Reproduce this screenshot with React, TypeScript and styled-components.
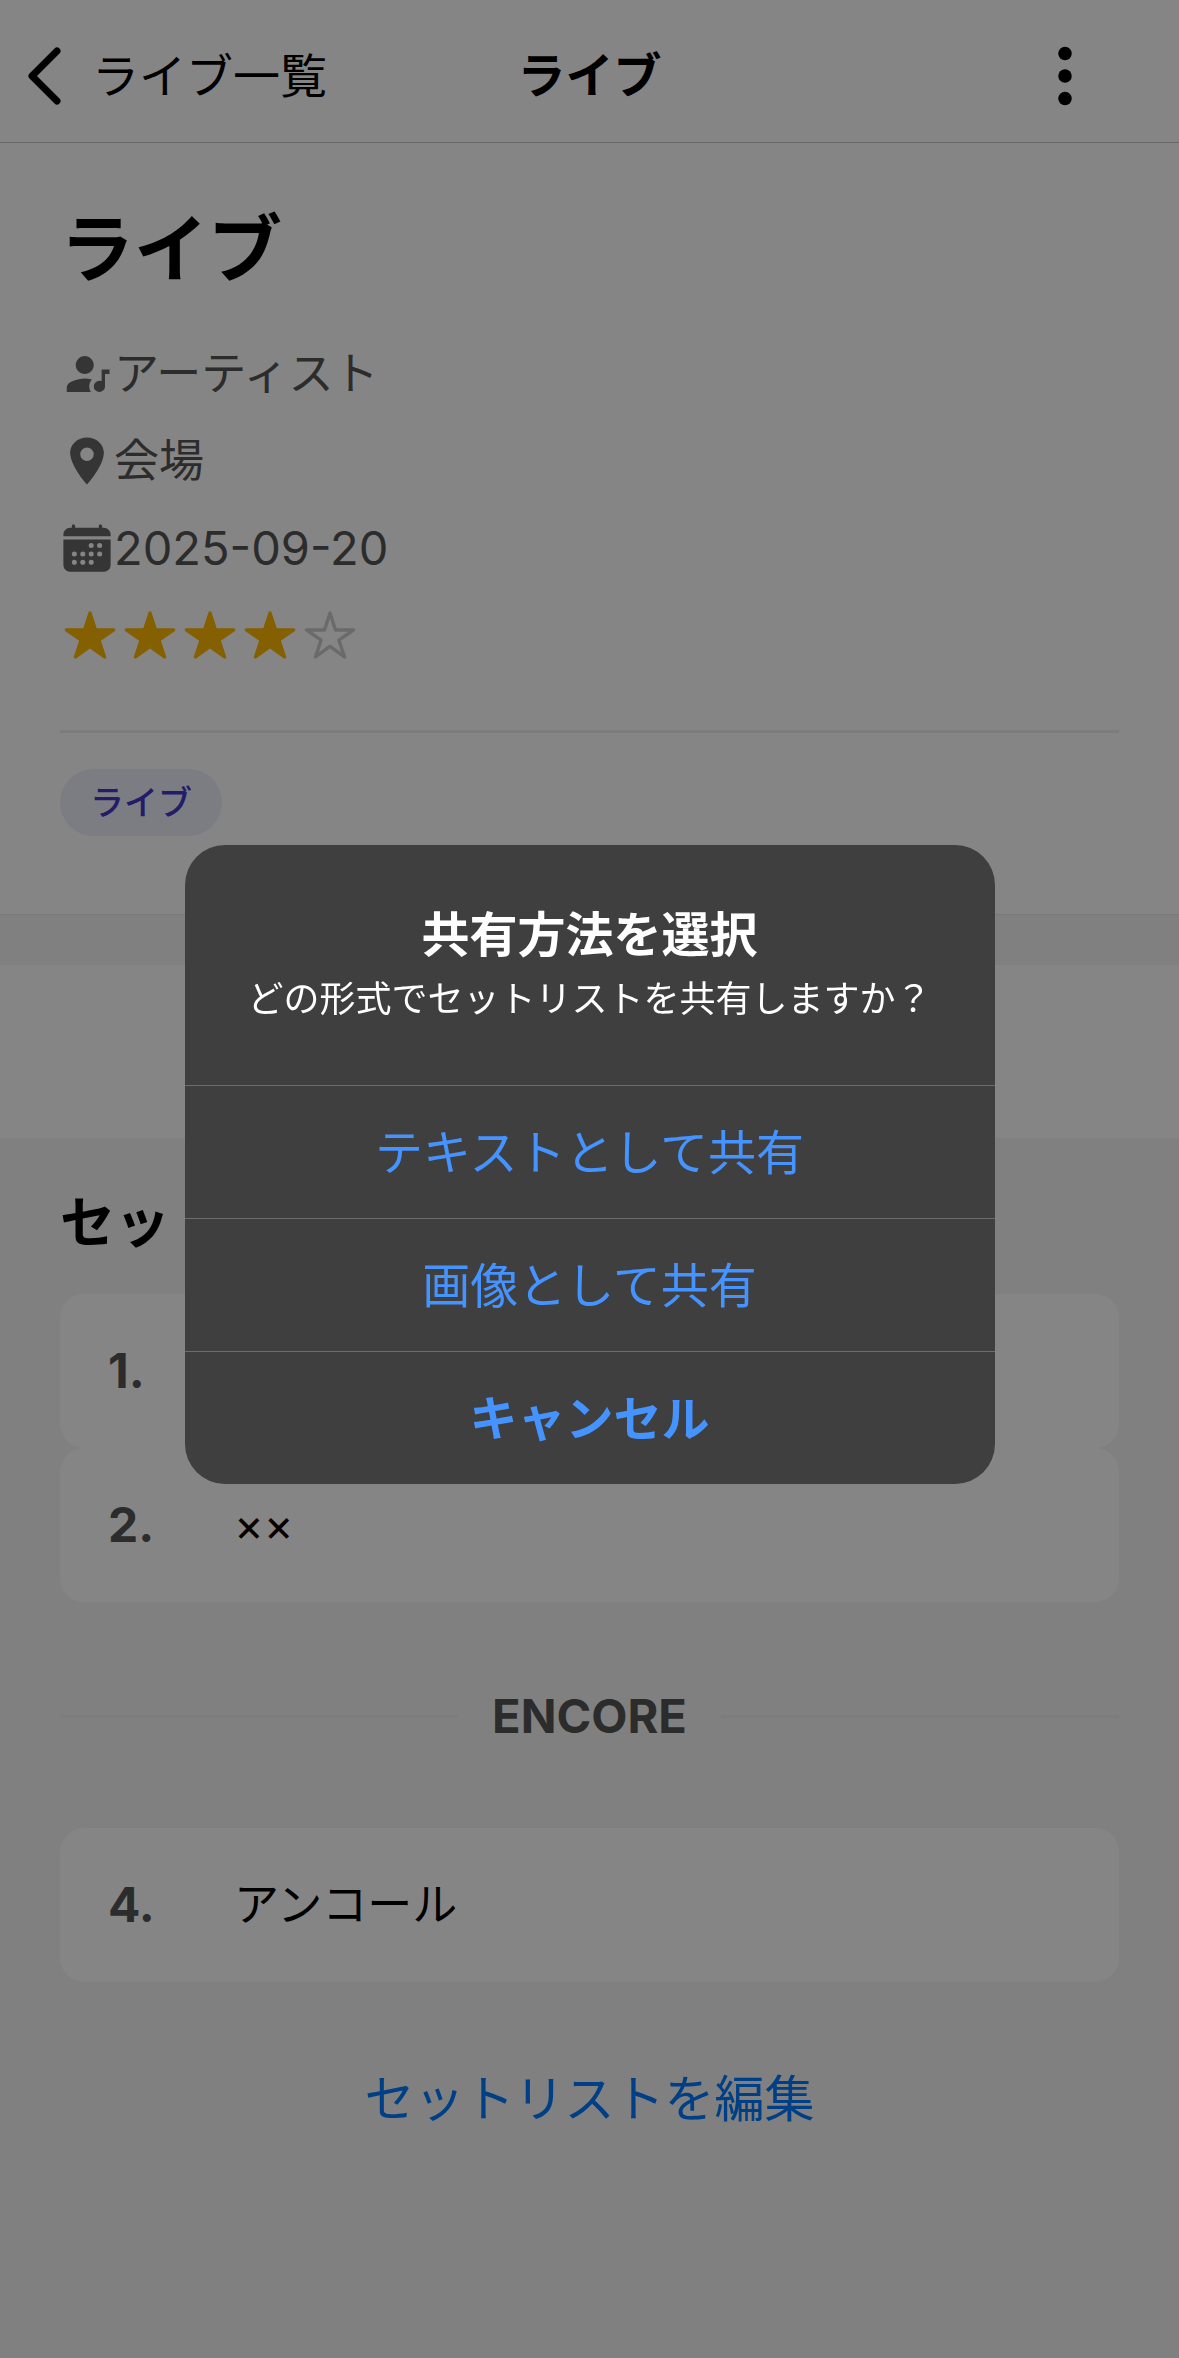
import React from "react";
import styled, { createGlobalStyle } from "styled-components";
import {
  IoCalendar,
  IoEllipsisVertical,
  IoLocationSharp,
  IoStar,
  IoStarOutline,
} from "react-icons/io5";

const GlobalStyle = createGlobalStyle`
  *, *::before, *::after {
    box-sizing: border-box;
  }
  body {
    margin: 0;
    background: #f5f5f5;
    color: #000;
    font-family: Inter, "Noto Sans CJK JP", sans-serif;
  }
  h1, h2, p, ol, ul {
    margin: 0;
    padding: 0;
  }
  ol, ul {
    list-style: none;
  }
  button {
    margin: 0;
    padding: 0;
    border: 0;
    background: none;
    color: inherit;
    font: inherit;
    cursor: pointer;
  }
  svg {
    display: block;
    flex: none;
  }
`;

const Screen = styled.div`
  min-height: 100vh;
  display: flex;
  flex-direction: column;
`;

const Header = styled.header`
  display: grid;
  grid-template-columns: 1fr auto 1fr;
  align-items: center;
  padding: 40px 78px 30px 24px;
  background: #fff;
  border-bottom: 1px solid #c6c6c6;
`;

const BackButton = styled.button`
  justify-self: start;
  display: flex;
  align-items: center;
  gap: 26px;
  font-size: 47px;
  line-height: 72px;
`;

const HeaderTitle = styled.p`
  padding-left: 54px;
  font-size: 48px;
  line-height: 72px;
  font-weight: 600;
`;

const MenuButton = styled.button`
  justify-self: end;
`;

const Summary = styled.section`
  padding: 60px 60px 78px;
  background: #fff;
  border-bottom: 1px solid #e8e8e8;
`;

const LiveTitle = styled.h1`
  font-size: 74px;
  line-height: 92px;
  font-weight: 700;
`;

const Details = styled.div`
  display: flex;
  flex-direction: column;
  gap: 33px;
  padding: 52px 0 68px;
  border-bottom: 3px solid #eee;
`;

const DetailRow = styled.p<{ $numeric?: boolean }>`
  display: flex;
  align-items: center;
  color: #555;
  font-size: ${({ $numeric }) => ($numeric ? 47 : 45)}px;
  line-height: 54px;

  svg {
    color: #666;
  }
`;

const Stars = styled.div`
  display: flex;
  gap: 6px;
  padding-left: 3px;
  color: #ffb800;
`;

const EmptyStar = styled(IoStarOutline)`
  color: #ccc;
`;

const Tag = styled.span`
  display: inline-block;
  margin-top: 36px;
  padding: 0 30px;
  border-radius: 36px;
  background: #eef0fc;
  color: #4338ca;
  font-size: 34px;
  line-height: 67px;
  font-weight: 500;
  vertical-align: top;
`;

const Panel = styled.section`
  height: 173px;
  margin-top: 50px;
  background: #fff;
`;

const Setlist = styled.section`
  display: flex;
  flex-direction: column;
  padding: 48px 60px;
`;

const SectionTitle = styled.h2`
  margin-bottom: 36px;
  font-size: 55px;
  line-height: 72px;
  font-weight: 700;
`;

const Song = styled.li`
  display: flex;
  align-items: center;
  min-height: 154px;
  padding: 0 48px;
  border-radius: 24px;
  background: #fff;
  font-size: 45px;
  line-height: 60px;
`;

const SongNumber = styled.span`
  flex: none;
  width: 126px;
  color: #555;
  font-size: 48px;
  font-weight: 700;
`;

const Encore = styled.div`
  display: flex;
  align-items: center;
  gap: 34px;
  margin: 84px 0 82px;
  color: #555;
  font-size: 47px;
  line-height: 60px;
  font-weight: 700;

  &::before,
  &::after {
    content: "";
    flex: 1;
    height: 3px;
    background: #f0f0f0;
  }
`;

const EditButton = styled.button`
  align-self: center;
  margin-top: 81px;
  color: #007aff;
  font-size: 50px;
  line-height: 72px;
`;

const Backdrop = styled.div`
  position: fixed;
  inset: 0;
  display: flex;
  align-items: center;
  justify-content: center;
  padding-bottom: 30px;
  background: rgba(0, 0, 0, 0.48);
`;

const Alert = styled.div`
  width: 810px;
  overflow: hidden;
  border-radius: 40px;
  background: #3f3f3f;
  color: #fff;
  text-align: center;
`;

const AlertText = styled.div`
  padding: 58px 30px 54px;
`;

const AlertTitle = styled.h2`
  font-size: 48px;
  line-height: 64px;
  font-weight: 600;
`;

const AlertMessage = styled.p`
  font-size: 36px;
  line-height: 64px;
`;

const AlertAction = styled.button<{ $strong?: boolean }>`
  display: block;
  width: 100%;
  padding-top: 2px;
  border-top: 1px solid #6c6c6c;
  color: #4593ff;
  font-size: 48px;
  line-height: 130px;
  font-weight: ${({ $strong }) => ($strong ? 600 : 400)};
`;

const ChevronIcon = () => (
  <svg width="42" height="72" viewBox="0 0 42 72" fill="none" aria-hidden="true">
    <path
      d="M33 11 8 36 33 61"
      stroke="#000"
      strokeWidth="7"
      strokeLinecap="round"
      strokeLinejoin="round"
    />
  </svg>
);

const ArtistIcon = () => (
  <svg width="54" height="54" viewBox="0 0 24 24" fill="currentColor" aria-hidden="true">
    <path d="M11,14C12,14 13.05,14.16 14.2,14.44C13.39,15.31 13,16.33 13,17.5C13,18.39 13.25,19.23 13.78,20H3V18C3,16.81 3.91,15.85 5.74,15.12C7.57,14.38 9.33,14 11,14M11,12C9.92,12 9,11.61 8.18,10.83C7.38,10.05 7,9.11 7,8C7,6.92 7.38,6 8.18,5.18C9,4.38 9.92,4 11,4C12.11,4 13.05,4.38 13.83,5.18C14.61,6 15,6.92 15,8C15,9.11 14.61,10.05 13.83,10.83C13.05,11.61 12.11,12 11,12M18.5,10H22V12H20V17.5A2.5,2.5 0 0,1 17.5,20A2.5,2.5 0 0,1 15,17.5A2.5,2.5 0 0,1 17.5,15C17.86,15 18.19,15.07 18.5,15.21V10Z" />
  </svg>
);

const RATING = 4;

export default function App() {
  return (
    <>
      <GlobalStyle />
      <Screen>
        <Header>
          <BackButton type="button">
            <ChevronIcon />
            ライブ一覧
          </BackButton>
          <HeaderTitle>ライブ</HeaderTitle>
          <MenuButton type="button" aria-label="メニュー">
            <IoEllipsisVertical size={72} />
          </MenuButton>
        </Header>

        <Summary>
          <LiveTitle>ライブ</LiveTitle>
          <Details>
            <DetailRow>
              <ArtistIcon />
              アーティスト
            </DetailRow>
            <DetailRow>
              <IoLocationSharp size={54} />
              会場
            </DetailRow>
            <DetailRow $numeric>
              <IoCalendar size={54} />
              2025-09-20
            </DetailRow>
            <Stars role="img" aria-label="4 / 5">
              {[1, 2, 3, 4, 5].map((n) =>
                n <= RATING ? <IoStar key={n} size={54} /> : <EmptyStar key={n} size={54} />
              )}
            </Stars>
          </Details>
          <Tag>ライブ</Tag>
        </Summary>

        <Panel />

        <Setlist>
          <SectionTitle>セットリスト</SectionTitle>
          <ol>
            <Song>
              <SongNumber>1.</SongNumber>
            </Song>
            <Song>
              <SongNumber>2.</SongNumber>
              ××
            </Song>
          </ol>
          <Encore>ENCORE</Encore>
          <ol>
            <Song>
              <SongNumber>4.</SongNumber>
              アンコール
            </Song>
          </ol>
          <EditButton type="button">セットリストを編集</EditButton>
        </Setlist>
      </Screen>

      <Backdrop>
        <Alert role="alertdialog" aria-modal="true" aria-labelledby="share-title" aria-describedby="share-message">
          <AlertText>
            <AlertTitle id="share-title">共有方法を選択</AlertTitle>
            <AlertMessage id="share-message">どの形式でセットリストを共有しますか？</AlertMessage>
          </AlertText>
          <AlertAction type="button">テキストとして共有</AlertAction>
          <AlertAction type="button">画像として共有</AlertAction>
          <AlertAction type="button" $strong>
            キャンセル
          </AlertAction>
        </Alert>
      </Backdrop>
    </>
  );
}
